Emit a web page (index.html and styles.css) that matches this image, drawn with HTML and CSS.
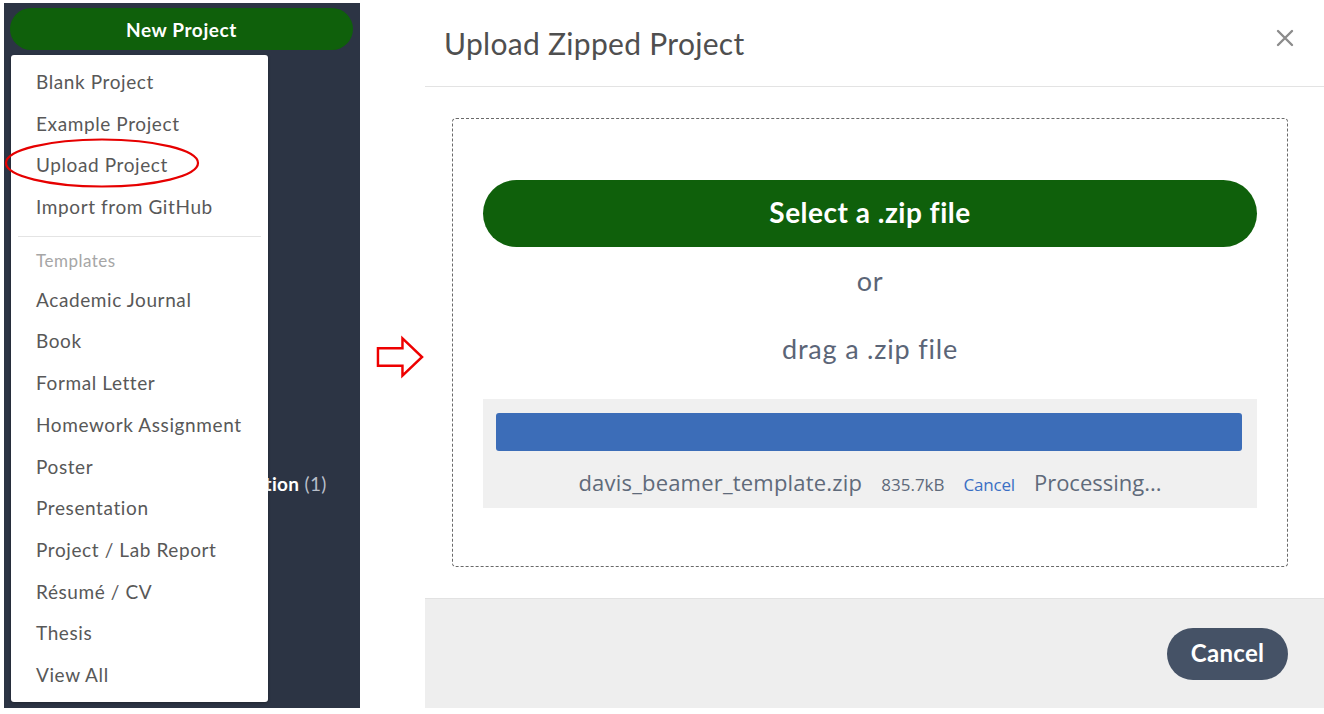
FILE: index.html
```html
<!DOCTYPE html>
<html lang="en">
<head>
<meta charset="utf-8">
<title>Upload Zipped Project</title>
<link rel="stylesheet" href="styles.css">
</head>
<body>
<div class="page">
  <aside class="sidebar">
    <button class="new-project">New Project</button>
    <ul class="tags">
      <li class="tag"><span class="tag-name">Presentation</span> <span class="tag-count">(1)</span></li>
    </ul>
    <div class="dropdown">
      <ul class="menu">
        <li class="menu-item">Blank Project</li>
        <li class="menu-item">Example Project</li>
        <li class="menu-item">Upload Project</li>
        <li class="menu-item">Import from GitHub</li>
      </ul>
      <div class="divider"></div>
      <div class="menu-header">Templates</div>
      <ul class="menu">
        <li class="menu-item">Academic Journal</li>
        <li class="menu-item">Book</li>
        <li class="menu-item">Formal Letter</li>
        <li class="menu-item">Homework Assignment</li>
        <li class="menu-item">Poster</li>
        <li class="menu-item">Presentation</li>
        <li class="menu-item">Project / Lab Report</li>
        <li class="menu-item">Résumé / CV</li>
        <li class="menu-item">Thesis</li>
        <li class="menu-item">View All</li>
      </ul>
    </div>
    <svg class="highlight" width="200" height="54" viewBox="0 0 200 54">
      <ellipse cx="98" cy="26" rx="96" ry="23.5" fill="none" stroke="#e60000" stroke-width="2.2"/>
    </svg>
  </aside>

  <div class="gap">
    <svg class="arrow" width="50" height="44" viewBox="0 0 50 44">
      <polygon points="2,13 27,13 27,3 47,22 27,41 27,31 2,31" fill="none" stroke="#ee0000" stroke-width="2.5" stroke-linejoin="miter"/>
    </svg>
  </div>

  <section class="modal">
    <header class="modal-header">
      <h1 class="modal-title">Upload Zipped Project</h1>
      <svg class="close" width="18" height="18" viewBox="0 0 18 18">
        <path d="M2 2 L16 16 M16 2 L2 16" stroke="#8c8c8c" stroke-width="2.4" stroke-linecap="round"/>
      </svg>
    </header>
    <div class="modal-body">
      <div class="dropzone">
        <button class="select-btn">Select a .zip file</button>
        <div class="or">or</div>
        <div class="drag">drag a .zip file</div>
        <div class="progress-box">
          <div class="progress-bar"></div>
          <div class="file-row">
            <span class="file-name">davis_beamer_template.zip</span>
            <span class="file-size">835.7kB</span>
            <span class="file-cancel">Cancel</span>
            <span class="file-status">Processing...</span>
          </div>
        </div>
      </div>
    </div>
    <footer class="modal-footer">
      <button class="cancel-btn">Cancel</button>
    </footer>
  </section>
</div>
</body>
</html>
```

FILE: styles.css
```css
* { box-sizing: border-box; }
html, body {
  margin: 0;
  padding: 0;
  background: #ffffff;
  font-family: Lato, "Open Sans", Arial, sans-serif;
}
ul { list-style: none; margin: 0; padding: 0; }
button { font-family: inherit; border: none; cursor: pointer; }

.page {
  display: flex;
  width: 1324px;
  height: 714px;
  align-items: flex-start;
}

/* ---------- sidebar ---------- */
.sidebar {
  position: relative;
  margin: 3px 0 0 4px;
  width: 356px;
  height: 705px;
  background: #2c3444;
  padding: 5px 0 0 6px;
}
.new-project {
  display: block;
  width: 343px;
  height: 42px;
  border-radius: 21px;
  background: #0f600b;
  color: #ffffff;
  font-weight: 700;
  font-size: 19px;
  letter-spacing: 0.6px;
  padding: 0;
}
.tags {
  margin-top: 421px;
  padding-left: 178px;
}
.tag {
  line-height: 26px;
  font-size: 19px;
  letter-spacing: 0.3px;
  white-space: nowrap;
}
.tag-name { color: #ffffff; font-weight: 700; }
.tag-count { color: #b8bec9; }

.dropdown {
  position: absolute;
  left: 7px;
  top: 52px;
  width: 257px;
  height: 647px;
  background: #ffffff;
  border-radius: 3px;
  box-shadow: 0 1px 3px rgba(0,0,0,0.3);
  padding: 6px 0 5px;
}
.menu-item {
  height: 41.7px;
  line-height: 41.7px;
  padding-left: 25px;
  font-size: 19px;
  letter-spacing: 0.6px;
  color: #585858;
  white-space: nowrap;
}
.divider {
  height: 1px;
  background: #e4e4e4;
  margin: 8px 7px 0;
}
.menu-header {
  padding: 6px 0 0 25px;
  line-height: 36px;
  font-size: 17px;
  letter-spacing: 0.5px;
  color: #a6a6a6;
}
.highlight {
  position: absolute;
  left: 0;
  top: 134px;
}

/* ---------- arrow column ---------- */
.gap {
  width: 65px;
  height: 708px;
  display: flex;
  align-items: center;
  padding-left: 16px;
}
.arrow { display: block; margin-top: 6px; }

/* ---------- modal ---------- */
.modal {
  width: 899px;
  height: 708px;
  display: flex;
  flex-direction: column;
  background: #ffffff;
}
.modal-header {
  height: 87px;
  border-bottom: 1px solid #e3e3e3;
  display: flex;
  align-items: center;
  justify-content: space-between;
  padding: 0 30px 0 19px;
}
.modal-title {
  margin: 0;
  font-size: 30px;
  letter-spacing: 0.3px;
  font-weight: 400;
  color: #4f4f4f;
}
.close { display: block; margin-top: -10px; }

.modal-body {
  padding: 31px 36px 31px 27px;
}
.dropzone {
  height: 449px;
  border: 1px dashed #6a6a6a;
  border-radius: 4px;
  padding: 61px 30px 0;
  text-align: center;
}
.select-btn {
  display: block;
  width: 100%;
  height: 67px;
  border-radius: 34px;
  background: #0f600b;
  color: #ffffff;
  font-size: 28px;
  letter-spacing: 0.5px;
  font-weight: 700;
  padding: 0 0 3px;
}
.or, .drag {
  font-size: 27px;
  letter-spacing: 0.8px;
  line-height: 40px;
  color: #5b6577;
}
.or { margin-top: 14px; }
.drag { margin-top: 28px; }

.progress-box {
  margin-top: 30px;
  background: #f0f0f0;
  padding: 14px 15px 11px 13px;
}
.progress-bar {
  height: 38px;
  background: #3c6db8;
  border-radius: 3px;
}
.file-row {
  margin-top: 16px;
  height: 30px;
  display: flex;
  justify-content: center;
  align-items: baseline;
  gap: 19px;
  font-family: "Open Sans", Arial, sans-serif;
  color: #5f6a7a;
  line-height: 30px;
  padding-left: 2px;
}
.file-name { font-size: 22px; letter-spacing: 0.2px; }
.file-size { font-size: 17px; }
.file-cancel { font-size: 17px; color: #3a6fc4; letter-spacing: -0.2px; }
.file-status { font-size: 22px; }

.modal-footer {
  flex: 1;
  background: #eeeeee;
  border-top: 1px solid #e2e2e2;
  display: flex;
  justify-content: flex-end;
  align-items: flex-start;
  padding: 29px 36px 0 0;
}
.cancel-btn {
  width: 121px;
  height: 52px;
  border-radius: 26px;
  background: #455266;
  color: #ffffff;
  font-size: 24px;
  letter-spacing: 0.3px;
  font-weight: 700;
  padding: 0 0 3px;
}
```
